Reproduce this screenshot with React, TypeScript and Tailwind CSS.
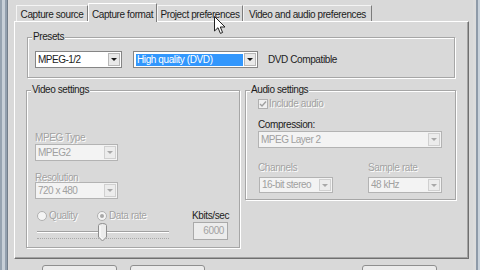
const font = "font-['Liberation_Sans',Arial,sans-serif] text-[10px] tracking-[-0.4px] leading-[12px]";
const dim = "text-[#a2a2a2] [text-shadow:1px_1px_0_#ffffff]";
const ink = "text-[#1c1c1c]";
// label whose glyphs sit a little lower in its 12px box
const low = "h-[12px] leading-[16px]";

function Combo({
  w,
  text,
  disabled,
  selected,
  h = "h-[17px]",
}: {
  w: string;
  text: string;
  disabled?: boolean;
  selected?: boolean;
  h?: string;
}) {
  return (
    <div
      className={`flex ${w} ${h} items-stretch border ${
        disabled ? "border-[#b3b3b3] bg-[#f3f3f3]" : "border-[#858585] bg-white"
      }`}
    >
      <div className="flex min-w-0 flex-1 items-center overflow-hidden pl-[2px]">
        {selected ? (
          <span className="flex h-[12px] flex-1 items-center bg-[#3297fd] pl-[1px] text-white">{text}</span>
        ) : (
          <span className={`whitespace-nowrap tracking-[-0.5px] ${disabled ? "text-[#a0a0a0]" : ink}`}>{text}</span>
        )}
      </div>
      <span
        className={`m-[1px] flex w-[12px] shrink-0 items-center justify-center border ${
          disabled ? "border-[#d0d0d0] bg-[#ececec]" : "border-[#b8b8b8] bg-[#e9e9e9]"
        }`}
      >
        <span
          className={`h-0 w-0 border-x-[3px] border-t-[3px] border-x-transparent ${
            disabled ? "border-t-[#a8a8a8]" : "border-t-[#1a1a1a]"
          }`}
        />
      </span>
    </div>
  );
}

function Group({
  title,
  className,
  children,
}: {
  title: string;
  className: string;
  children: React.ReactNode;
}) {
  return (
    <fieldset
      className={`border border-[#a6a6a6] shadow-[1px_1px_0_#ffffff,inset_1px_1px_0_#ffffff] ${className}`}
    >
      <legend className={`ml-[4px] bg-[#d9d9d9] px-[1px] ${ink}`}>{title}</legend>
      {children}
    </fieldset>
  );
}

function Radio({ on }: { on?: boolean }) {
  return (
    <span className="flex h-[10px] w-[10px] items-center justify-center rounded-full border border-[#b0b0b0] bg-[#f4f4f4]">
      {on && <span className="h-[4px] w-[4px] rounded-full bg-[#a8a8a8]" />}
    </span>
  );
}

const tabs = [
  { label: "Capture source", w: "w-[72px]" },
  { label: "Capture format", w: "w-[69px]", active: true },
  { label: "Project preferences", w: "w-[86px]" },
  { label: "Video and audio preferences", w: "w-[129px]" },
];

export default function App() {
  return (
    <div className={`relative flex h-[270px] w-[480px] overflow-hidden bg-[#d9d9d9] ${font}`}>
      {/* window frame, left */}
      <div className="w-[9px] shrink-0 bg-[linear-gradient(to_right,#96a3b0_0,#96a3b0_2px,#c7cfd7_2px,#c7cfd7_5px,#93a0ae_5px,#93a0ae_7px,#737e8a_7px,#737e8a_8px,#dcdcdc_8px)]" />

      <div className="flex min-w-0 flex-1 flex-col pl-[5px] pr-[4px] pt-[3px]">
        {/* tabs */}
        <div className="flex h-[21px] items-end pl-[2px]">
          {tabs.map((t) =>
            t.active ? (
              <div
                key={t.label}
                className={`relative z-10 -mb-[1px] flex h-[19px] ${t.w} items-start justify-center border-l border-r border-t border-l-white border-r-[#7c7c7c] border-t-white bg-[#d9d9d9] pt-[5px] ${ink}`}
              >
                {t.label}
              </div>
            ) : (
              <div
                key={t.label}
                className={`flex h-[16px] ${t.w} items-start justify-center border-r border-t border-l border-l-[#f4f4f4] border-r-[#7c7c7c] border-t-[#f4f4f4] pt-[3px] ${ink}`}
              >
                {t.label}
              </div>
            ),
          )}
        </div>

        {/* tab page */}
        <div className="flex h-[238px] shrink-0 flex-col border border-b-[#6f6f6f] border-l-white border-r-[#6f6f6f] border-t-white pl-[11px] pr-[12px] pt-[9px] shadow-[inset_-1px_-1px_0_#a3a3a3]">
          <Group title="Presets" className="mx-[1px] h-[47px]">
            <div className="flex items-center pl-[7px] pt-[8px]">
              <Combo w="w-[87px]" text="MPEG-1/2" />
              <div className="ml-[11px]">
                <Combo w="w-[125px]" text="High quality (DVD)" selected />
              </div>
              <span className={`ml-[10px] ${ink}`}>DVD Compatible</span>
            </div>
          </Group>

          <div className="mt-[6px] flex items-start gap-[5px]">
            <Group title="Video settings" className="h-[164px] w-[214px] shrink-0">
              <div className="flex flex-col pl-[8px] pt-[34px]">
                <span className={`${low} ${dim}`}>MPEG Type</span>
                <div className="mt-[2px]">
                  <Combo w="w-[83px]" text="MPEG2" disabled />
                </div>
                <span className={`mt-[9px] ${low} ${dim}`}>Resolution</span>
                <Combo w="w-[83px]" text="720 x 480" disabled />

                <div className="mt-[9px] flex pr-[11px]">
                  <div className="flex flex-col pl-[2px]">
                    <div className="flex h-[14px] items-center pt-[2px]">
                      <div className="flex w-[60px] items-center gap-[2px]">
                        <Radio />
                        <span className={dim}>Quality</span>
                      </div>
                      <div className="flex items-center gap-[2px]">
                        <Radio on />
                        <span className={dim}>Data rate</span>
                      </div>
                    </div>
                    <div className="relative h-[20px] w-[132px]">
                      <div className="mt-[9px] h-[2px] border-b border-t border-b-white border-t-[#a0a0a0]" />
                      <div className="mt-[5px] h-0 border-t border-dotted border-[#a8a8a8]" />
                      <svg className="absolute left-[60px] top-[1px]" width="11" height="19" viewBox="0 0 11 19">
                        <path
                          d="M1.5 2.5 Q1.5 0.5 5.5 0.5 Q9.5 0.5 9.5 2.5 L9.5 14 L5.5 18 L1.5 14 Z"
                          fill="#ececec"
                          stroke="#8e8e8e"
                        />
                        <path d="M3 3 L3 13.5 L5.5 16" fill="none" stroke="#ffffff" />
                      </svg>
                    </div>
                  </div>
                  <div className="ml-auto flex flex-col items-end">
                    <span className={`-mr-[1px] ${low} ${ink}`}>Kbits/sec</span>
                    <div className="mt-[2px] flex h-[18px] w-[35px] items-center justify-end border border-[#a9a9a9] bg-[#ececec] pr-[3px] text-[#a2a2a2]">
                      6000
                    </div>
                  </div>
                </div>
              </div>
            </Group>

            <Group title="Audio settings" className="h-[116px] min-w-0 flex-1">
              <div className="flex flex-col pl-[12px] pt-[2px]">
                <div className="flex h-[12px] items-center gap-[1px]">
                  <span className="flex h-[10px] w-[10px] items-center justify-center border border-[#b0b0b0] bg-[#f0f0f0]">
                    <svg width="8" height="8" viewBox="0 0 8 8">
                      <path d="M1 4 L3 6 L7 1.5" fill="none" stroke="#a0a0a0" strokeWidth="1.4" />
                    </svg>
                  </span>
                  <span className={dim}>Include audio</span>
                </div>
                <span className={`mt-[7px] ${low} ${ink}`}>Compression:</span>
                <div className="mt-[2px]">
                  <Combo w="w-[184px]" text="MPEG Layer 2" disabled />
                </div>
                <div className="mt-[14px] flex">
                  <span className={`w-[110px] ${dim}`}>Channels</span>
                  <span className={dim}>Sample rate</span>
                </div>
                <div className="mt-[3px] flex gap-[35px] pl-[1px]">
                  <Combo w="w-[74px]" h="h-[16px]" text="16-bit stereo" disabled />
                  <Combo w="w-[74px]" h="h-[16px]" text="48 kHz" disabled />
                </div>
              </div>
            </Group>
          </div>
        </div>

        {/* dialog buttons, cut off at the bottom */}
        <div className="mt-[6px] flex pl-[28px] pr-[32px]">
          <div className="h-[10px] w-[75px] rounded-t-[3px] border border-[#8f8f8f] bg-[#ececec]" />
          <div className="ml-[13px] h-[10px] w-[75px] rounded-t-[3px] border border-[#8f8f8f] bg-[#ececec]" />
          <div className="ml-auto h-[10px] w-[75px] rounded-t-[3px] border border-[#8f8f8f] bg-[#ececec]" />
        </div>
      </div>

      {/* window frame, right */}
      <div className="w-[7px] shrink-0 bg-[linear-gradient(to_right,#dcdcdc_0,#dcdcdc_3px,#8e9aa8_3px,#8e9aa8_5px,#c9d2db_5px)]" />

      {/* mouse pointer */}
      <svg className="absolute left-[214px] top-[16px]" width="13" height="19" viewBox="0 0 13 19">
        <path
          d="M0.5 0.5 L0.5 15 L4 11.7 L6.4 17.4 L8.6 16.5 L6.3 11 L11 11 Z"
          fill="#ffffff"
          stroke="#202020"
          strokeLinejoin="round"
        />
      </svg>
    </div>
  );
}
